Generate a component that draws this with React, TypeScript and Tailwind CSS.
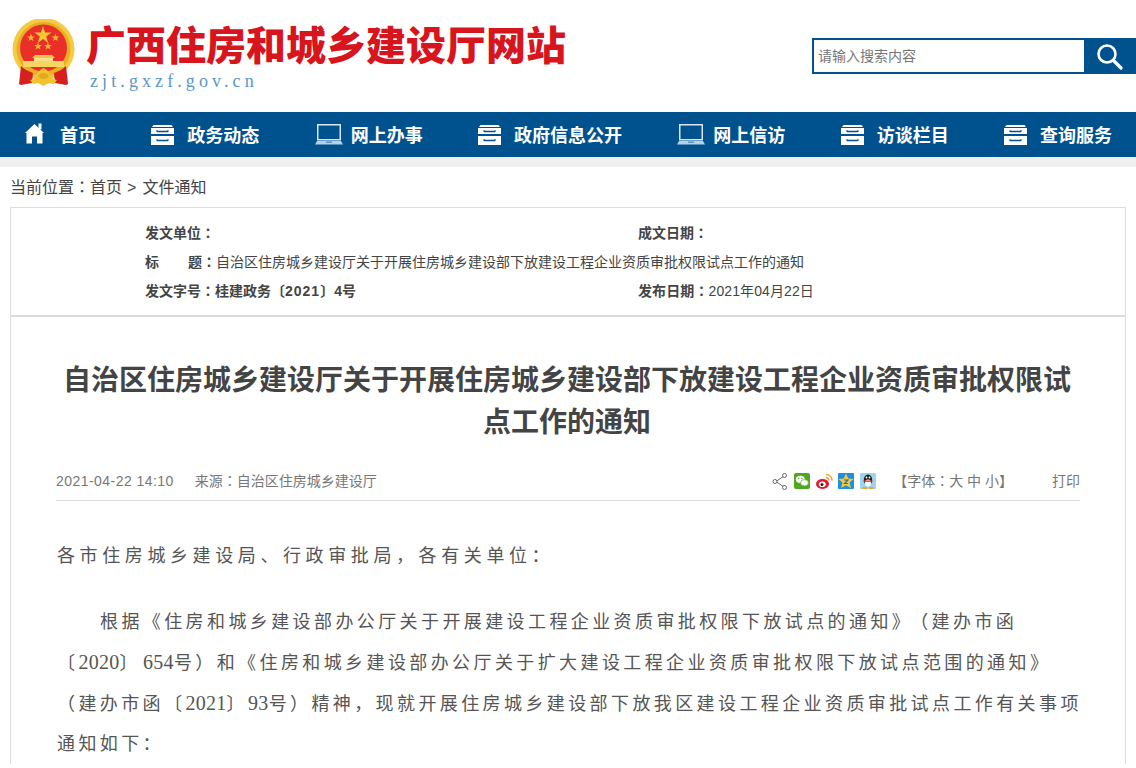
const sans = '"Liberation Sans", "Noto Sans CJK SC", sans-serif';
const serif = '"Liberation Serif", "Noto Sans CJK SC", serif';

// centred full-width colon, SC glyph sits in the corner of its cell
function Colon() {
  return (
    <span className="leading-[0]" style={{ fontFamily: '"Noto Sans CJK TC", sans-serif' }}>
      ：
    </span>
  );
}

// digits in the article run larger and without the letter spacing
function Num({ children, className = '' }: { children: React.ReactNode; className?: string }) {
  return <span className={`text-[20px] tracking-[0.300px] ${className}`}>{children}</span>;
}

function Emblem() {
  return (
    <svg width="64" height="70" viewBox="0 0 64 70">
      <circle cx="31.500" cy="30" r="31" fill="#f5cb45" />
      <circle cx="31.500" cy="30" r="27" fill="#e9ae24" />
      <circle cx="31.500" cy="29" r="23.500" fill="#ea2f28" />
      <polygon points="31,7 33,13.500 39.500,13.500 34.200,17.500 36.200,24 31,20 25.800,24 27.800,17.500 22.500,13.500 29,13.500" fill="#f6c833" />
      <polygon points="19,14.500 20,17.500 23,17.500 20.600,19.300 21.500,22 19,20.400 16.500,22 17.400,19.300 15,17.500 18,17.500" fill="#f0b92c" />
      <polygon points="43.500,14.500 44.500,17.500 47.500,17.500 45.100,19.300 46,22 43.500,20.400 41,22 41.900,19.300 39.500,17.500 42.500,17.500" fill="#f0b92c" />
      <polygon points="26,23 27,26 30,26 27.600,27.800 28.500,30.500 26,28.900 23.500,30.500 24.400,27.800 22,26 25,26" fill="#f0b92c" />
      <polygon points="36,23 37,26 40,26 37.600,27.800 38.500,30.500 36,28.900 33.500,30.500 34.400,27.800 32,26 35,26" fill="#f0b92c" />
      <path d="M23 36h17l3 3H20z" fill="#f3c64a" />
      <rect x="22" y="39" width="19" height="3" fill="#f8e08c" />
      <path d="M11 42h41v6H11z" fill="#f6d565" />
      <path d="M9 47c3 3 7 5 12 7l-1 10-11 2-2-1z" fill="#d81e1e" />
      <path d="M54 47c-3 3-7 5-12 7l1 10 11 2 2-1z" fill="#d81e1e" />
      <path d="M22 60c2-5 5-9 9.500-11 4.500 2 7.500 6 9.500 11l4 1-3 4-5-1-5.500 3-5.500-3-5 1-3-4z" fill="#f2c230" />
      <ellipse cx="31.500" cy="57" rx="5" ry="3" fill="#e3a81f" />
    </svg>
  );
}

function Cabinet() {
  return (
    <svg width="23" height="20" viewBox="0 0 23 20">
      <path d="M2.500 0h18l1.500 2H1z" fill="#fff" />
      <path d="M0 3h23v6H0z" fill="#fff" />
      <path d="M0 11h23v9H0z" fill="#fff" />
      <path d="M6 6.500h11M6 15.500h11" stroke="#00528f" strokeWidth="1.500" fill="none" />
      <path d="M6 5v2M17 5v2M6 14v2M17 14v2" stroke="#00528f" strokeWidth="1" />
    </svg>
  );
}

function Laptop() {
  return (
    <svg width="28" height="21" viewBox="0 0 28 21">
      <rect x="2.750" y="0.750" width="22.500" height="15" fill="none" stroke="#dbe7f0" strokeWidth="1.500" />
      <path d="M2 17h24l2 3.500H0z" fill="#b9d0e2" />
      <rect x="11" y="17.500" width="6" height="1.500" fill="#5d93bd" />
    </svg>
  );
}

function Home() {
  return (
    <svg width="21" height="21" viewBox="0 0 21 21" className="-mt-[2px]">
      <path d="M10.500 1 20 10h-1.500v10.500h-5.500v-7H8v7H2.500V10H1z" fill="#fff" />
      <rect x="14.500" y="0.500" width="3" height="6" fill="#fff" />
    </svg>
  );
}

function NavItem({ icon, label, gap }: { icon: React.ReactNode; label: string; gap: string }) {
  return (
    <a className={`flex items-center ${gap} text-[18px] font-bold text-white`}>
      {icon}
      <span className="pt-[4px]">{label}</span>
    </a>
  );
}

function ShareIcons() {
  return (
    <div className="flex items-center gap-[6px]">
      <svg width="16" height="17" viewBox="0 0 16 17">
        <path d="M12 3 4 8.500l8 5.500" fill="none" stroke="#666" strokeWidth="1" />
        <circle cx="12.500" cy="2.500" r="2" fill="#fff" stroke="#666" />
        <circle cx="3" cy="8.500" r="2" fill="#fff" stroke="#666" />
        <circle cx="12.500" cy="14.500" r="2" fill="#fff" stroke="#666" />
      </svg>
      <svg width="16" height="16" viewBox="0 0 16 16">
        <rect width="16" height="16" rx="2" fill="#4fa71f" />
        <ellipse cx="6.300" cy="6.300" rx="4.500" ry="3.600" fill="#fff" />
        <ellipse cx="10.500" cy="9.800" rx="4" ry="3.200" fill="#fff" stroke="#4fa71f" strokeWidth=".7" />
        <circle cx="4.700" cy="5.500" r=".7" fill="#4fa71f" />
        <circle cx="7.800" cy="5.500" r=".7" fill="#4fa71f" />
      </svg>
      <svg width="17" height="17" viewBox="0 0 17 17" className="-mr-[1px]">
        <ellipse cx="6.500" cy="11" rx="6.500" ry="5" fill="#e6162d" />
        <ellipse cx="6.300" cy="11.300" rx="3.500" ry="2.800" fill="#fff" />
        <circle cx="6" cy="11.500" r="1.500" fill="#222" />
        <path d="M10 1.500c3.500 0 6 2.500 6 6M10 4.500c1.500 0 3 1.500 3 3" fill="none" stroke="#f29a1f" strokeWidth="1.400" />
      </svg>
      <svg width="16" height="16" viewBox="0 0 16 16">
        <rect width="16" height="16" rx="1" fill="#1d8fe0" />
        <polygon points="8,0.500 10.300,5.500 15.500,6 11.500,9.500 13,15 8,12.300 3,15 4.500,9.500 0.500,6 5.700,5.500" fill="#fbc82e" />
        <path d="M6 7h4L6.500 10.500H10" fill="none" stroke="#1d6fc0" strokeWidth="1.100" />
      </svg>
      <svg width="16" height="16" viewBox="0 0 16 16">
        <rect width="16" height="16" rx="1" fill="#9fd3f0" />
        <ellipse cx="8" cy="7" rx="4.200" ry="5.500" fill="#222" />
        <ellipse cx="8" cy="10" rx="3" ry="3.600" fill="#fff" />
        <rect x="3.500" y="7.500" width="9" height="1.300" fill="#e02a20" />
        <circle cx="6.500" cy="4.500" r=".9" fill="#fff" />
        <circle cx="9.500" cy="4.500" r=".9" fill="#fff" />
        <path d="M3 14h4v2H2zM9 14h4l1 2H9z" fill="#f4a51c" />
      </svg>
    </div>
  );
}

export default function App() {
  return (
    <div className="h-[768px] overflow-hidden bg-white" style={{ fontFamily: sans }}>
      <header className="flex h-[112px] items-start justify-between">
        <div className="flex pl-[12px] pt-[19px]">
          <Emblem />
          <div className="ml-[10px]">
            <h1 className="mt-[1px] text-[40px] leading-[52px] font-black text-[#d8141c]">广西住房和城乡建设厅网站</h1>
            <p className="-mt-[2px] ml-[4px] text-[18px] leading-[22px] tracking-[4.100px] text-[#5b96c8]" style={{ fontFamily: serif }}>
              zjt.gxzf.gov.cn
            </p>
          </div>
        </div>
        <div className="mt-[38px] flex h-[36px] w-[324px] border-2 border-[#00528f]">
          <div className="flex-1 pl-[4px] text-[14px] leading-[32px] text-[#777]">请输入搜索内容</div>
          <div className="flex w-[50px] items-center justify-center bg-[#00528f]">
            <svg width="28" height="28" viewBox="0 0 28 28">
              <circle cx="12" cy="12" r="8.500" fill="none" stroke="#fff" strokeWidth="2.600" />
              <path d="M18.500 18.500 26 26" stroke="#fff" strokeWidth="3.200" strokeLinecap="round" />
            </svg>
          </div>
        </div>
      </header>

      <nav className="flex h-[45px] items-center justify-between bg-[#00528f] px-[24px]">
        <NavItem icon={<Home />} label="首页" gap="gap-[15px]" />
        <NavItem icon={<Cabinet />} label="政务动态" gap="gap-[13px]" />
        <NavItem icon={<Laptop />} label="网上办事" gap="gap-[8px]" />
        <NavItem icon={<Cabinet />} label="政府信息公开" gap="gap-[13px]" />
        <NavItem icon={<Laptop />} label="网上信访" gap="gap-[8px]" />
        <NavItem icon={<Cabinet />} label="访谈栏目" gap="gap-[13px]" />
        <NavItem icon={<Cabinet />} label="查询服务" gap="gap-[13px]" />
      </nav>
      <div className="h-[10px] bg-[#f0f0f0]" />

      <div className="pt-[11px] pl-[10px] text-[16px] leading-[20px] text-[#444]">
        当前位置<Colon />首页<span className="mr-[6px] ml-[5px]">&gt;</span>文件通知
      </div>

      <section className="mx-[10px] mt-[9px] h-[110px] border border-b-2 border-[#dddddd] pt-[11px] pl-[134px] text-[14px] leading-[29px] text-[#444]">
        <div className="grid grid-cols-[493px_1fr]">
          <div className="font-bold">发文单位<Colon /></div>
          <div className="font-bold">成文日期<Colon /></div>
          <div className="col-span-2">
            <span className="inline-flex w-[71px] justify-between font-bold">
              <span>标</span>
              <span>题<Colon /></span>
            </span>
            自治区住房城乡建设厅关于开展住房城乡建设部下放建设工程企业资质审批权限试点工作的通知
          </div>
          <div className="font-bold">
            发文字号<Colon />桂建政务〔<span className="tracking-[1px]">2021</span>〕4号
          </div>
          <div className="tracking-[0.100px]">
            <span className="font-bold">发布日期<Colon /></span>2021年04月22日
          </div>
        </div>
      </section>

      <main className="mx-[10px] border-x border-[#dddddd] px-[45px] pt-[43px]">
        <h2 className="pr-[2px] text-center text-[28px] leading-[42px] font-bold text-[#444]">
          自治区住房城乡建设厅关于开展住房城乡建设部下放建设工程企业资质审批权限试点工作的通知
        </h2>
        <div className="mt-[16px] flex h-[41px] items-center border-b border-[#dddddd] pt-[2px] text-[14px] text-[#777]">
          <span className="tracking-[0.450px]">2021-04-22 14:10</span>
          <span className="ml-[21px]">来源<Colon />自治区住房城乡建设厅</span>
          <div className="ml-auto flex items-center">
            <ShareIcons />
            <span className="ml-[17px]">【字体<Colon />大 中 小】</span>
            <span className="ml-[39px]">打印</span>
          </div>
        </div>
        <div className="-mr-[2px] pt-[35px] pl-[1px] text-[18px] leading-[40px] text-[#555]" style={{ fontFamily: serif }}>
          <p className="pb-[26px] tracking-[4.600px]">各市住房城乡建设局、行政审批局，各有关单位：</p>
          <p className="indent-[43px] tracking-[3.400px]">
            根据《住房和城乡建设部办公厅关于开展建设工程企业资质审批权限下放试点的通知》<span className="ml-[6px]">（</span>建办市函〔<Num>2020</Num>〕<Num className="ml-[2px]">654</Num>号）和《住房和城乡建设部办公厅关于扩大建设工程企业资质审批权限下放试点范围的通知》（建办市函〔<Num>2021</Num>〕<Num>93</Num>号）精神，现就开展住房城乡建设部下放我区建设工程企业资质审批试点工作有关事项通知如下：
          </p>
        </div>
      </main>
    </div>
  );
}
